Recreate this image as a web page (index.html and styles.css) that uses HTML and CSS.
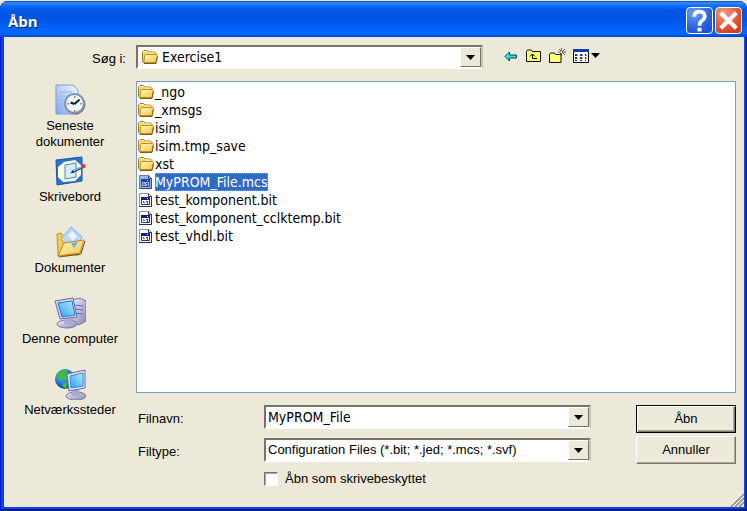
FILE: index.html
```html
<!DOCTYPE html>
<html lang="da">
<head>
<meta charset="utf-8">
<meta name="viewport" content="width=device-width, initial-scale=1">
<title>Åbn</title>
<link rel="stylesheet" href="styles.css">
</head>
<body>
<svg class="defs" aria-hidden="true">
  <defs>
    <linearGradient id="gold" x1="0" y1="0" x2="1" y2="1"><stop offset="0" stop-color="#fffac4"/><stop offset="1" stop-color="#f2c244"/></linearGradient>
    <linearGradient id="screen" x1="1" y1="0" x2="0" y2="1"><stop offset="0" stop-color="#b4f0ff"/><stop offset="1" stop-color="#2f9cf0"/></linearGradient>
    <linearGradient id="paper" x1="0" y1="1" x2="1" y2="0"><stop offset="0" stop-color="#7fa6ee"/><stop offset="1" stop-color="#f4f9ff"/></linearGradient>
    <linearGradient id="steel" x1="0" y1="0" x2="1" y2="1"><stop offset="0" stop-color="#f0f0ff"/><stop offset="1" stop-color="#8686b8"/></linearGradient>
    <radialGradient id="globe" cx=".35" cy=".3" r=".8"><stop offset="0" stop-color="#6cc4ff"/><stop offset=".6" stop-color="#1766d8"/><stop offset="1" stop-color="#0a348c"/></radialGradient>
    <symbol id="folder" viewBox="0 0 16 16">
      <path d="M.5 12.500V3l1.500-1.500h3.500l1.500 1.500h5.500l1.500 1.500v8l-1.500 1.500H2z" fill="#f6d669" stroke="#a97c1c"/>
      <path d="M1.500 5V3l.5-.5h3.500L7 4h5.500" fill="none" stroke="#fff6b4"/>
      <path d="M3.500 5.500h11q1 0 .8 1L14 13.500H2L2.500 6.500z" fill="url(#gold)" stroke="#c08d20"/>
      <path d="M2 14.500h12l1.500-7" fill="none" stroke="#7c5a18"/>
    </symbol>
    <symbol id="file" viewBox="0 0 16 16">
      <path d="M1.500 1.500h9l3 3v10H1.500z" fill="#fff" stroke="#8c98a8"/>
      <path d="M1 14.500h12.500v-10h-3v-3" fill="none" stroke="#26323e"/>
      <path d="M3.500 5.500h8v7h-8z" fill="#fff" stroke="#26309a"/>
      <path d="M3 5h9v3H3z" fill="#141c8c"/>
      <path d="M9 6h1v1H9z" fill="#fff"/>
      <path d="M5 9h1v1H5zM5 10h2v1H5zM9 10h1v1H9z" fill="#e0304c"/>
      <path d="M8 9h1v1H8zM9 9h1v1H9zM9 11h1v1H9z" fill="#2840c8"/>
    </symbol>
    <symbol id="arrow" viewBox="0 0 9 5"><path d="M0 0h9L4.500 5z"/></symbol>
  </defs>
</svg>
<form class="dialog" onsubmit="return false">
  <header class="titlebar">
    <h1>Åbn</h1>
    <button class="caption help" type="button" aria-label="Hjælp"><svg viewBox="0 0 24 24"><path d="M7 8.500Q7 3.500 12 3.500t5 4.500q0 2.500-2.500 4T12 17" fill="none" stroke="#fff" stroke-width="3.500"/><path d="M10 19h4v3.500h-4z" fill="#fff"/></svg></button>
    <button class="caption close" type="button" aria-label="Luk"><svg viewBox="0 0 24 24"><path d="M4.500 4.500l15 15m0-15l-15 15" stroke="#fff" stroke-width="4"/></svg></button>
  </header>
  <div class="content">
    <label class="look-label" for="look">Søg i:</label>
    <div class="toolbar">
      <div class="combo look">
        <svg class="icon"><use href="#folder"/></svg>
        <select id="look"><option>Exercise1</option></select>
        <span class="drop"><svg><use href="#arrow"/></svg></span>
      </div>
      <div class="tools">
        <button type="button" aria-label="Tilbage"><svg width="16" height="16" viewBox="0 0 16 16"><path d="M2 8.500l4.500-4.500v3h7v3h-7v3z" fill="#20e8f0" stroke="#003c50"/></svg></button>
        <button type="button" aria-label="Et niveau op"><svg width="16" height="16" viewBox="0 0 16 16"><path d="M.5 13.500v-10l1-1.500h4l1 1.500h8v10z" fill="#ffff70" stroke="#111"/><path d="M6.500 6v4.500H11M4 8.500l2.500-2.500 2.500 2.500" fill="none" stroke="#000"/></svg></button>
        <button type="button" aria-label="Ny mappe"><svg width="17" height="16" viewBox="0 0 17 16"><path d="M.5 14.500v-8l1-1.500h4l1 1.500h5.500v8z" fill="#ffff70" stroke="#111"/><path d="M12.500 0v8M9 4h8M10 1l6 6m0-6l-6 6" stroke="#444" stroke-width=".8"/><path d="M12 3h1v2h-1z" fill="#fff"/></svg></button>
        <button class="views" type="button" aria-label="Visning"><svg width="28" height="16" viewBox="0 0 28 16"><path d="M.5 1.500h15v13H.5z" fill="#fff" stroke="#000"/><path d="M0 1h16v3H0z" fill="#123cb0"/><path d="M2 6h2v2H2zM7 6h2v2H7zM12 6h1v2h-1zM2 9h2v2H2zM7 9h2v2H7zM12 9h1v2h-1zM2 12h2v1H2zM7 12h2v1H7zM12 12h1v1h-1z" fill="#26309a"/><path d="M4 7h1v1H4zM9 7h1v1H9zM13 7h1v1h-1zM4 10h1v1H4zM9 10h1v1H9zM13 10h1v1h-1z" fill="#889"/><path d="M18 5h9l-4.500 5z"/></svg></button>
      </div>
    </div>
    <nav class="places" aria-label="Steder">
      <a href="#"><svg viewBox="0 0 32 32"><path d="M2 1h17l5 5v24H2z" fill="url(#paper)" stroke="#7c9ce0"/><path d="M5 8h13M5 12h9M5 16h7M5 20h7" stroke="#92b2f0"/><circle cx="21.500" cy="20.500" r="10" fill="#667284"/><circle cx="20.500" cy="19.500" r="9.500" fill="#e6f8ff" stroke="#8292ac" stroke-width="2"/><path d="M20.500 20l5-4.500M20.500 20l-4-1.500" stroke="#123" stroke-width="2"/><path d="M20 12h1.500v2H20zM20 26h1.500v2H20zM13 19h2v1.500h-2zM26 19h2v1.500h-2z" fill="#f07038"/></svg>Seneste dokumenter</a>
      <a href="#"><svg viewBox="0 0 32 32"><path d="M2 5l26-3v24L3 30z" fill="#2874d0" stroke="#1758a8"/><path d="M10 7l11-2 6 5v10l-6 6-12 1-5-5V12z" fill="#fffbe0"/><path d="M11 10l11-2v14l-11 2z" fill="#d4ecff" stroke="#4686d0"/><path d="M18 17l13-6" stroke="#345f98" stroke-width="3"/><path d="M19 16l10-5" stroke="#aed4f4"/><path d="M16 18.500l3-3 1 2z" fill="#222"/><circle cx="29.500" cy="11" r="2" fill="#e43420"/></svg>Skrivebord</a>
      <a href="#"><svg viewBox="0 0 32 32"><path d="M3 8l4-1 3 3 14 1 1 18-21 1z" fill="#f5c94c" stroke="#c4922c"/><path d="M7 13L17 1l11 10-9 15z" fill="#b8d9fc" stroke="#82abe0"/><path d="M14 10l4-5 5 5-4 5z" fill="#e8f5ff"/><path d="M4 30l6-13 20-3-4 13z" fill="url(#gold)" stroke="#b6842a"/><path d="M17 17l7-1-4 6z" fill="#62b0ee"/><path d="M5 31l22-3 4-13" fill="none" stroke="#6e552a"/></svg>Dokumenter</a>
      <a href="#"><svg viewBox="0 0 32 32"><path d="M18 3l8-2 6 3v20l-7 4-7-4z" fill="url(#steel)" stroke="#7878a8"/><path d="M21 8l8 1M21 12l8 1M21 16l8 1" stroke="#6868a0"/><ellipse cx="13" cy="27" rx="10" ry="4" fill="url(#steel)" stroke="#7878a0"/><path d="M12 20h6l1 7h-9z" fill="#a9aad4"/><path d="M1 4l18-3 4 19-17 2z" fill="#d2d5f3" stroke="#686ca6"/><path d="M4 6l14-2 3 14-13 2z" fill="url(#screen)" stroke="#227acd"/></svg>Denne computer</a>
      <a href="#"><svg viewBox="0 0 32 32"><circle cx="11" cy="11" r="10" fill="url(#globe)"/><path d="M4 5q5-5 10-3l-3 4 4 3-3 4-3-3-4 2-3-3zM9 14l5 1-2 6-4-3z" fill="#42b83c"/><ellipse cx="22" cy="28" rx="10" ry="4" fill="url(#steel)" stroke="#7878a0"/><path d="M19 21h6l1 7h-9z" fill="#a9aad4"/><path d="M13 6l18-4v18l-16 3z" fill="#e1e1f6" stroke="#686ca6"/><path d="M16 8l13-3v13l-12 2z" fill="url(#screen)" stroke="#388bd0"/></svg>Netværkssteder</a>
    </nav>
    <main class="main">
      <ul class="files" role="listbox" aria-label="Filer">
        <li role="option"><svg class="icon"><use href="#folder"/></svg><span>_ngo</span></li>
        <li role="option"><svg class="icon"><use href="#folder"/></svg><span>_xmsgs</span></li>
        <li role="option"><svg class="icon"><use href="#folder"/></svg><span>isim</span></li>
        <li role="option"><svg class="icon"><use href="#folder"/></svg><span>isim.tmp_save</span></li>
        <li role="option"><svg class="icon"><use href="#folder"/></svg><span>xst</span></li>
        <li role="option" aria-selected="true" class="selected"><svg class="icon" viewBox="0 0 16 16"><use href="#file"/><path d="M1 1h9.500L14 4.500V15H1z" fill="#316ac5" opacity=".5"/></svg><span>MyPROM_File.mcs</span></li>
        <li role="option"><svg class="icon"><use href="#file"/></svg><span>test_komponent.bit</span></li>
        <li role="option"><svg class="icon"><use href="#file"/></svg><span>test_komponent_cclktemp.bit</span></li>
        <li role="option"><svg class="icon"><use href="#file"/></svg><span>test_vhdl.bit</span></li>
      </ul>
      <div class="bottom">
        <div class="fields">
          <label class="caption-label" for="name">Filnavn:</label>
          <div class="combo name"><input id="name" type="text" value="MyPROM_File"><button class="drop" type="button" aria-label="Vis tidligere"><svg><use href="#arrow"/></svg></button></div>
          <label class="caption-label" for="type">Filtype:</label>
          <div class="combo"><select id="type"><option>Configuration Files (*.bit; *.jed; *.mcs; *.svf)</option></select><span class="drop"><svg><use href="#arrow"/></svg></span></div>
          <label class="readonly"><input type="checkbox">Åbn som skrivebeskyttet</label>
        </div>
        <div class="actions">
          <button class="push default" type="submit">Åbn</button>
          <button class="push" type="button">Annuller</button>
        </div>
      </div>
    </main>
    <svg class="grip" viewBox="0 0 14 14" aria-hidden="true"><path d="M1 14L14 1M5 14l9-9M9 14l5-5" stroke="#a09c88" stroke-width="2"/><path d="M0 13L13 0M3 14L14 3M7 14l7-7" stroke="#fff"/></svg>
  </div>
</form>
</body>
</html>
```
FILE: styles.css
```css
* { box-sizing: border-box; }

body {
  margin: 0;
  padding-top: 1px;
  min-height: 100vh;
  display: flex;
  background: #ece9d8;
  color: #000;
  font: 13px/16px "Liberation Sans", Arial, sans-serif;
}

button, input, select { font: inherit; color: inherit; margin: 0; }

.defs { position: absolute; width: 0; height: 0; }

.dialog {
  flex: 1;
  display: flex;
  flex-direction: column;
  padding: 0 3px 4px 4px;
  border-radius: 8px 8px 0 0;
  background: #0046e6;
  box-shadow: inset 1px 0 #0019cf, inset -1px -2px #001890;
}

.titlebar {
  display: flex;
  align-items: center;
  gap: 2px;
  height: 36px;
  margin: 0 -3px 0 -4px;
  padding: 3px 5px 0 8px;
  border-radius: 8px 8px 0 0;
  background: linear-gradient(#0848c8 0, #3090ff 2px, #1470f8 4px, #0058e8 9px, #0054e3 18px, #0064fa 28px, #0068ff 33px, #0040cc 36px);
}

.titlebar h1 {
  flex: 1;
  margin: 0;
  color: #fff;
  font: bold 15px/20px "Open Sans", sans-serif;
  text-shadow: 1px 1px #0a246a;
}

.caption {
  width: 27px;
  height: 27px;
  padding: 0;
  border: 1px solid #fff;
  border-radius: 4px;
}

.caption svg { display: block; width: 25px; height: 25px; }
.help { background: radial-gradient(circle at 30% 20%, #6e9cf8, #2860e0 60%, #1848c8); }
.close { background: radial-gradient(circle at 30% 20%, #f09c80, #e05030 60%, #c83810); }

.content {
  position: relative;
  flex: 1;
  display: grid;
  grid-template-columns: 132px 1fr;
  grid-template-rows: 24px 1fr;
  row-gap: 12px;
  padding: 8px 8px 20px 0;
  background: #ece9d8;
}

.look-label { padding-right: 10px; text-align: right; line-height: 28px; }

.toolbar { display: flex; gap: 20px; }

.combo {
  display: flex;
  align-items: center;
  height: 24px;
  padding-left: 1px;
  background: #fff;
  border: 2px solid;
  border-color: #77756a #c8c5b4 #fff #77756a;
}

.combo select, .combo input {
  flex: 1;
  min-width: 0;
  height: 20px;
  padding: 0 1px;
  border: 0;
  outline: 0;
  appearance: none;
  background: none;
}

.look { flex: 0 1 347px; padding-left: 4px; gap: 3px; }

.look select, .files, .combo.name input {
  font-family: "DejaVu Sans Condensed", "DejaVu Sans", sans-serif;
  font-size: 14px;
}

.icon { flex: none; width: 16px; height: 16px; }

.drop {
  display: grid;
  place-items: center;
  flex: none;
  width: 21px;
  align-self: stretch;
  padding: 0;
  background: #ece9d8;
  border: 1px solid;
  border-color: #fff #77756a #77756a #fff;
}

.drop svg { width: 9px; height: 5px; }

.tools { display: flex; align-items: center; gap: 7px; padding-bottom: 2px; }
.tools button { display: flex; padding: 0; border: 0; background: none; }

.places { display: flex; flex-direction: column; padding-top: 3px; }

.places a {
  display: flex;
  flex-direction: column;
  align-items: center;
  gap: 2px;
  height: 71px;
  padding: 0 20px;
  color: inherit;
  text-align: center;
  text-decoration: none;
  white-space: nowrap;
}

.places a:first-child { white-space: normal; }
.places svg { flex: none; width: 32px; height: 32px; }

.main { display: flex; flex-direction: column; gap: 12px; min-width: 0; }

.files {
  flex: 1;
  margin: 0;
  padding: 1px;
  list-style: none;
  background: #fff;
  border: 1px solid #7f9db9;
  line-height: 18px;
}

.files li { display: flex; align-items: center; gap: 1px; height: 18px; }
.selected span { background: #316ac5; color: #fff; outline: 1px dotted #d89538; outline-offset: -1px; padding-right: 1px; }

.bottom { display: flex; gap: 45px; }

.fields {
  flex: 1;
  display: grid;
  grid-template-columns: 126px 1fr;
  grid-template-rows: 24px 24px 16px;
  row-gap: 9px;
  align-items: center;
  padding-left: 2px;
}

.caption-label { padding-top: 3px; }
.readonly { grid-column: 2; display: flex; align-items: center; gap: 7px; }

.readonly input {
  width: 14px;
  height: 14px;
  appearance: none;
  background: #fff;
  border: 1px solid;
  border-color: #77756a #fff #fff #77756a;
  box-shadow: inset 1px 1px #a8a698;
}

.actions { display: flex; flex-direction: column; gap: 3px; width: 100px; }

.push {
  height: 28px;
  padding: 0;
  background: #ece9d8;
  border: 1px solid;
  border-color: #fff #77756a #77756a #fff;
  box-shadow: inset -1px -1px #aca899;
}

.default { border-color: #000; box-shadow: inset 1px 1px #fff, inset -1px -1px #77756a, inset -2px -2px #aca899; }

.grip { position: absolute; right: 0; bottom: 0; width: 14px; height: 14px; }
```
